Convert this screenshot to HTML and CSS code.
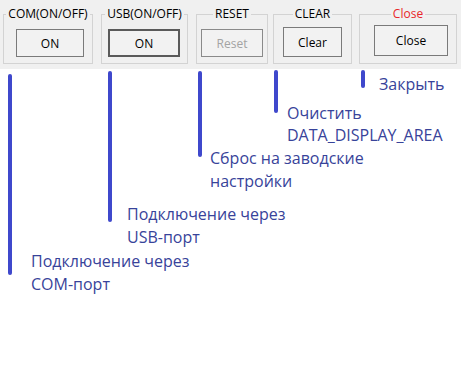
FILE: index.html
```html
<!DOCTYPE html>
<html lang="ru">
<head>
    <meta charset="UTF-8">
    <meta name="viewport" content="width=device-width, initial-scale=1.0">
    <title>Панель управления</title>
    <link rel="stylesheet" href="styles.css">
</head>
<body>
    <div class="toolbar">
        <fieldset class="group group-com">
            <legend>COM(ON/OFF)</legend>
            <button class="btn btn-com">ON</button>
        </fieldset>
        <fieldset class="group group-usb">
            <legend>USB(ON/OFF)</legend>
            <button class="btn btn-usb">ON</button>
        </fieldset>
        <fieldset class="group group-reset">
            <legend>RESET</legend>
            <button class="btn btn-reset" disabled>Reset</button>
        </fieldset>
        <fieldset class="group group-clear">
            <legend>CLEAR</legend>
            <button class="btn btn-clear">Clear</button>
        </fieldset>
        <fieldset class="group group-close">
            <legend class="legend-red">Close</legend>
            <button class="btn btn-close">Close</button>
        </fieldset>
    </div>

    <!-- подписи к кнопкам -->
    <div class="notes">
        <span class="stem stem-com"></span>
        <span class="stem stem-usb"></span>
        <span class="stem stem-reset"></span>
        <span class="stem stem-clear"></span>
        <span class="stem stem-close"></span>

        <p class="note note-com">Подключение через<br>COM-порт</p>
        <p class="note note-usb">Подключение через<br>USB-порт</p>
        <p class="note note-reset">Сброс на заводские<br>настройки</p>
        <p class="note note-clear">Очистить<br>DATA_DISPLAY_AREA</p>
        <p class="note note-close">Закрыть</p>
    </div>
</body>
</html>
```

FILE: styles.css
```css
body {
    margin: 0;
    background: #fff;
    font-family: "Open Sans", Arial, sans-serif;
}
.toolbar {
    display: flex;
    align-items: flex-start;
    height: 69px;
    box-sizing: border-box;
    padding: 6px 0 0 3px;
    background: #f0f0f0;
}
.group {
    box-sizing: border-box;
    height: 58px;
    margin: 0;
    padding: 0;
    border: 1px solid #d3d3d3;
}
.group legend {
    margin: 0 auto;
    padding: 0 2px;
    font-size: 12px;
    line-height: 16px;
    color: #000;
}
.group legend.legend-red {
    color: #e8262a;
}
.group-com {
    width: 90px;
}
.group-usb {
    width: 87px;
    margin-left: 8px;
}
.group-reset {
    width: 72px;
    margin-left: 8px;
}
.group-clear {
    width: 79px;
    margin-left: 5px;
}
.group-close {
    width: 98px;
    margin-left: 7px;
}
.btn {
    display: block;
    box-sizing: border-box;
    padding: 0;
    border: 1px solid #7a7a7a;
    background: #f2f2f2;
    font-family: "Open Sans", Arial, sans-serif;
    font-size: 12px;
    color: #000;
}
.btn-com {
    width: 68px;
    height: 28px;
    margin: 7px 0 0 12px;
}
.btn-usb {
    width: 72px;
    height: 28px;
    margin: 7px 0 0 6px;
    border: 2px solid #5a5a5a;
}
.btn-reset {
    width: 62px;
    height: 28px;
    margin: 7px 0 0 4px;
    border-color: #8a8a8a;
    color: #a3a3a3;
}
.btn-clear {
    width: 59px;
    height: 30px;
    margin: 5px 0 0 9px;
}
.btn-close {
    width: 74px;
    height: 31px;
    margin: 3px 0 0 14px;
}

.notes {
    position: relative;
    height: 298px;
}
.stem {
    position: absolute;
    width: 4px;
    border-radius: 2px;
    background: #3f48cc;
}
.stem-com {
    left: 8px;
    top: 5px;
    height: 201px;
}
.stem-usb {
    left: 108px;
    top: 2px;
    height: 151px;
}
.stem-reset {
    left: 198px;
    top: 2px;
    height: 86px;
}
.stem-clear {
    left: 274px;
    top: 1px;
    height: 43px;
}
.stem-close {
    left: 361px;
    top: 1px;
    height: 18px;
}
.note {
    position: absolute;
    margin: 0;
    font-size: 16px;
    line-height: 23px;
    color: #38439a;
    white-space: nowrap;
}
.note-com {
    left: 31px;
    top: 181px;
}
.note-usb {
    left: 127px;
    top: 134px;
}
.note-reset {
    left: 210px;
    top: 78px;
}
.note-clear {
    left: 287px;
    top: 33px;
    line-height: 22px;
}
.note-close {
    left: 379px;
    top: 4px;
}
```
